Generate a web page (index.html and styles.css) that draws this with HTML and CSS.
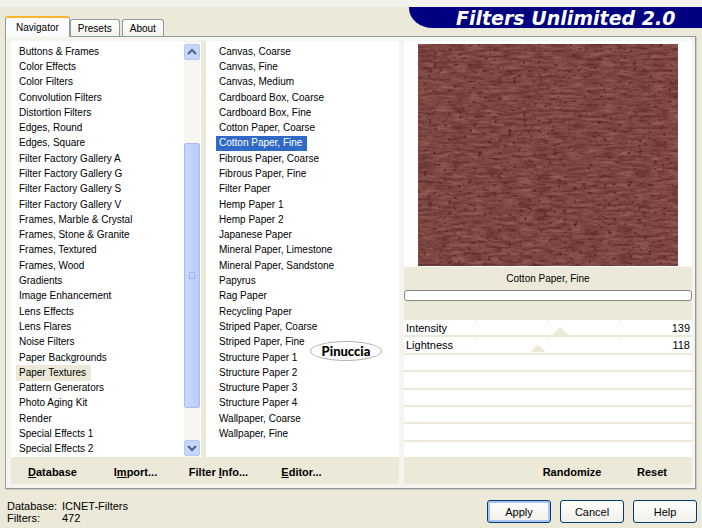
FILE: index.html
```html
<!DOCTYPE html>
<html lang="en">
<head>
    <meta charset="UTF-8">
    <meta name="viewport" content="width=device-width, initial-scale=1.0">
    <title>Filters Unlimited 2.0</title>
    <link rel="stylesheet" href="styles.css">
</head>
<body>
    <header class="header">
        <nav class="tabs">
            <button class="tab active">Navigator</button>
            <button class="tab">Presets</button>
            <button class="tab">About</button>
        </nav>
        <h1 class="banner">Filters Unlimited 2.0</h1>
    </header>

    <main class="panel">
        <section class="browser">
            <div class="lists">
                <!-- categories -->
                <ul class="list">
                    <li><button>Buttons &amp; Frames</button></li>
                    <li><button>Color Effects</button></li>
                    <li><button>Color Filters</button></li>
                    <li><button>Convolution Filters</button></li>
                    <li><button>Distortion Filters</button></li>
                    <li><button>Edges, Round</button></li>
                    <li><button>Edges, Square</button></li>
                    <li><button>Filter Factory Gallery A</button></li>
                    <li><button>Filter Factory Gallery G</button></li>
                    <li><button>Filter Factory Gallery S</button></li>
                    <li><button>Filter Factory Gallery V</button></li>
                    <li><button>Frames, Marble &amp; Crystal</button></li>
                    <li><button>Frames, Stone &amp; Granite</button></li>
                    <li><button>Frames, Textured</button></li>
                    <li><button>Frames, Wood</button></li>
                    <li><button>Gradients</button></li>
                    <li><button>Image Enhancement</button></li>
                    <li><button>Lens Effects</button></li>
                    <li><button>Lens Flares</button></li>
                    <li><button>Noise Filters</button></li>
                    <li><button>Paper Backgrounds</button></li>
                    <li><button class="current">Paper Textures</button></li>
                    <li><button>Pattern Generators</button></li>
                    <li><button>Photo Aging Kit</button></li>
                    <li><button>Render</button></li>
                    <li><button>Special Effects 1</button></li>
                    <li><button>Special Effects 2</button></li>
                </ul>
                <div class="scrollbar">
                    <button class="arrow" aria-label="Scroll up">
                        <svg width="10" height="8" viewBox="0 0 10 8"><path d="M1 6 L5 2 L9 6" fill="none" stroke="#4d6185" stroke-width="2"/></svg>
                    </button>
                    <div class="track">
                        <div class="thumb"><span class="grip"></span></div>
                    </div>
                    <button class="arrow" aria-label="Scroll down">
                        <svg width="10" height="8" viewBox="0 0 10 8"><path d="M1 2 L5 6 L9 2" fill="none" stroke="#4d6185" stroke-width="2"/></svg>
                    </button>
                </div>
                <!-- filters -->
                <ul class="list filters">
                    <li><button>Canvas, Coarse</button></li>
                    <li><button>Canvas, Fine</button></li>
                    <li><button>Canvas, Medium</button></li>
                    <li><button>Cardboard Box, Coarse</button></li>
                    <li><button>Cardboard Box, Fine</button></li>
                    <li><button>Cotton Paper, Coarse</button></li>
                    <li><button class="selected">Cotton Paper, Fine</button></li>
                    <li><button>Fibrous Paper, Coarse</button></li>
                    <li><button>Fibrous Paper, Fine</button></li>
                    <li><button>Filter Paper</button></li>
                    <li><button>Hemp Paper 1</button></li>
                    <li><button>Hemp Paper 2</button></li>
                    <li><button>Japanese Paper</button></li>
                    <li><button>Mineral Paper, Limestone</button></li>
                    <li><button>Mineral Paper, Sandstone</button></li>
                    <li><button>Papyrus</button></li>
                    <li><button>Rag Paper</button></li>
                    <li><button>Recycling Paper</button></li>
                    <li><button>Striped Paper, Coarse</button></li>
                    <li><button>Striped Paper, Fine</button></li>
                    <li><button>Structure Paper 1</button></li>
                    <li><button>Structure Paper 2</button></li>
                    <li><button>Structure Paper 3</button></li>
                    <li><button>Structure Paper 4</button></li>
                    <li><button>Wallpaper, Coarse</button></li>
                    <li><button>Wallpaper, Fine</button></li>
                </ul>
                <span class="signature">Pinuccia</span>
            </div>
            <div class="toolbar">
                <button><u>D</u>atabase</button>
                <button>I<u>m</u>port...</button>
                <button>Filter <u>I</u>nfo...</button>
                <button><u>E</u>ditor...</button>
            </div>
        </section>

        <section class="settings">
            <div class="preview">
                <svg width="100%" height="100%">
                    <filter id="paper" x="0" y="0" width="100%" height="100%" color-interpolation-filters="sRGB">
                        <feTurbulence type="fractalNoise" baseFrequency="0.06 0.35" numOctaves="4" seed="4" result="fibre"/>
                        <feColorMatrix in="fibre" type="matrix" values="0.28 0 0 0 0.35  0.26 0 0 0 0.15  0.24 0 0 0 0.14  0 0 0 0 1" result="base"/>
                        <feTurbulence type="fractalNoise" baseFrequency="0.2 0.35" numOctaves="2" seed="9" result="noise"/>
                        <feColorMatrix in="noise" type="matrix" values="0 0 0 0 0.36  0 0 0 0 0.14  0 0 0 0 0.14  5 0 0 0 -3"/>
                        <feMerge>
                            <feMergeNode in="base"/>
                            <feMergeNode/>
                        </feMerge>
                    </filter>
                    <rect width="100%" height="100%" filter="url(#paper)"/>
                </svg>
            </div>
            <div class="status">
                <p>Cotton Paper, Fine</p>
                <div class="progress"></div>
            </div>
            <div class="sliders">
                <div class="slider">
                    <label for="intensity">Intensity</label>
                    <input type="range" id="intensity" min="0" max="255" value="139">
                    <output for="intensity">139</output>
                </div>
                <div class="slider">
                    <label for="lightness">Lightness</label>
                    <input type="range" id="lightness" min="0" max="255" value="118">
                    <output for="lightness">118</output>
                </div>
                <div class="slider"></div>
                <div class="slider"></div>
                <div class="slider"></div>
                <div class="slider"></div>
                <div class="slider"></div>
                <div class="slider"></div>
            </div>
            <div class="toolbar right">
                <button>Randomize</button>
                <button>Reset</button>
            </div>
        </section>
    </main>

    <footer class="footer">
        <dl class="info">
            <dt>Database:</dt><dd>ICNET-Filters</dd>
            <dt>Filters:</dt><dd>472</dd>
        </dl>
        <div class="actions">
            <button class="btn primary">Apply</button>
            <button class="btn">Cancel</button>
            <button class="btn">Help</button>
        </div>
    </footer>
</body>
</html>
```
FILE: styles.css
```css
* {
    box-sizing: border-box;
}

body {
    display: flex;
    flex-direction: column;
    min-height: 100vh;
    margin: 0;
    border-top: 7px solid #f3f2ed;
    background-color: #ece9d8;
    font-family: "Liberation Sans", Arial, sans-serif;
    font-size: 11px;
    line-height: 14px;
    color: #000;
}

ul, dl, dd, p, h1 {
    margin: 0;
    padding: 0;
    list-style: none;
}

button {
    margin: 0;
    padding: 0;
    border: none;
    background: none;
    font: inherit;
    color: inherit;
}

/* header */
.header {
    display: flex;
    justify-content: space-between;
    align-items: flex-start;
    height: 29px;
    padding-left: 5px;
}

.tabs {
    display: flex;
    align-items: flex-end;
    gap: 2px;
    height: 30px;
    font-size: 10px;
}

.tab {
    height: 18px;
    padding: 0 7px;
    border: 1px solid #919b9c;
    border-bottom: none;
    border-radius: 3px 3px 0 0;
    background: linear-gradient(#fff, #f0f0ea);
}

.tab.active {
    z-index: 1;
    height: 21px;
    margin-right: -2px;
    padding: 0 10px;
    border-top: 2px solid #ffb52e;
    background: #fcfcfe;
}

.banner {
    width: 293px;
    height: 21px;
    padding-left: 47px;
    border-bottom-left-radius: 24px 20px;
    background-color: #000080;
    font-family: "DejaVu Sans", sans-serif;
    font-size: 19px;
    font-weight: bold;
    font-style: italic;
    line-height: 23px;
    color: #fff;
    white-space: nowrap;
}

/* main panel */
.panel {
    display: flex;
    flex: 1;
    gap: 5px;
    margin: 0 6px 0 5px;
    padding: 4px 3px 4px 5px;
    border: 1px solid #919b9c;
    box-shadow: 1px 1px 0 #c8c8bc;
    background-color: #f5f4ef;
}

.browser {
    display: flex;
    flex-direction: column;
    flex: 388;
}

.settings {
    display: flex;
    flex-direction: column;
    flex: 288;
}

.lists {
    position: relative;
    display: flex;
    flex: 1;
    background-color: #fff;
}

.list {
    display: grid;
    grid-template-rows: repeat(27, 1fr);
    flex: 168;
    padding: 3px 0 0 5px;
    font-size: 10px;
    white-space: nowrap;
}

.list.filters {
    flex: 183;
    padding-left: 10px;
    border-left: 5px solid #ece9d8;
}

.list li {
    display: flex;
}

.list button {
    padding: 0 5px 0 3px;
}

.list .current {
    background-color: #ece9d8;
}

.list .selected {
    background-color: #316ac5;
    color: #fff;
}

.signature {
    position: absolute;
    top: 72%;
    right: 17px;
    width: 72px;
    height: 20px;
    border: 1px solid #b0b0b0;
    border-radius: 50%;
    background-color: #fff;
    font-family: Lato, sans-serif;
    font-size: 13px;
    font-weight: 900;
    line-height: 18px;
    text-align: center;
}

/* scrollbar */
.scrollbar {
    display: flex;
    flex-direction: column;
    width: 16px;
    margin-right: 1px;
    padding: 3px 0 1px;
    background-color: #f6f5ef;
}

.arrow {
    display: flex;
    justify-content: center;
    align-items: center;
    height: 16px;
    border: 1px solid #b4c8f6;
    border-radius: 2px;
    background-color: #c6d6fd;
}

.track {
    display: flex;
    flex: 1;
    flex-direction: column;
    padding: 83px 0 32px;
}

.thumb {
    display: flex;
    flex: 1;
    justify-content: center;
    align-items: center;
    border: 1px solid #a5bdf5;
    border-radius: 2px;
    background: linear-gradient(to right, #cad8fe, #b9cbfa);
}

.grip {
    width: 6px;
    height: 7px;
    border: 1px solid #9db8f0;
}

/* toolbars */
.toolbar {
    display: grid;
    grid-template-columns: repeat(4, 83px);
    height: 27px;
    padding-top: 3px;
    background-color: #ece9d8;
    font-weight: bold;
}

.toolbar.right {
    grid-template-columns: repeat(2, 80px);
    justify-content: end;
}

/* settings */
.preview {
    flex: 1;
    padding: 3px 14px 1px;
    background-color: #fff;
}

.preview svg {
    display: block;
}

.status {
    height: 53px;
    padding-top: 5px;
    background-color: #ece9d8;
    font-size: 10px;
    text-align: center;
}

.progress {
    height: 11px;
    margin-top: 4px;
    border: 1px solid #85858a;
    border-radius: 3px;
    background-color: #fff;
}

.sliders {
    display: grid;
    grid-template-rows: repeat(8, 1fr);
    gap: 2px;
    height: 137px;
    background-color: #ece9d8;
}

.slider {
    display: grid;
    grid-template-columns: 1fr 1fr;
    background-color: #fff;
}

.slider label,
.slider input,
.slider output {
    grid-row: 1;
    padding: 1px 2px 0;
}

.slider label {
    grid-column: 1;
}

.slider output {
    grid-column: 2;
    text-align: right;
}

.slider input {
    grid-column: 1 / 3;
    width: 100%;
    height: 15px;
    margin: 0;
    padding: 0;
    appearance: none;
    /* quarter marks */
    background:
        linear-gradient(#ece9d8, #ece9d8) 25% 0 / 1px 3px no-repeat,
        linear-gradient(#ece9d8, #ece9d8) 50% 0 / 1px 3px no-repeat,
        linear-gradient(#ece9d8, #ece9d8) 75% 0 / 1px 3px no-repeat;
}

.slider input::-webkit-slider-thumb {
    appearance: none;
    width: 16px;
    height: 8px;
    margin-top: 7px;
    background-color: #ece9d8;
    clip-path: polygon(50% 0, 100% 100%, 0 100%);
}

/* footer */
.footer {
    display: flex;
    justify-content: space-between;
    align-items: flex-start;
    height: 39px;
    padding: 11px 5px 0 7px;
}

.info {
    display: grid;
    grid-template-columns: 55px auto;
    line-height: 12px;
}

.actions {
    display: flex;
    gap: 9px;
}

.btn {
    width: 64px;
    height: 23px;
    border: 1px solid #003c74;
    border-radius: 3px;
    background: linear-gradient(#fff, #f0efe8);
}

.btn.primary {
    box-shadow: inset 0 0 0 2px #a8c4f2;
}
```
